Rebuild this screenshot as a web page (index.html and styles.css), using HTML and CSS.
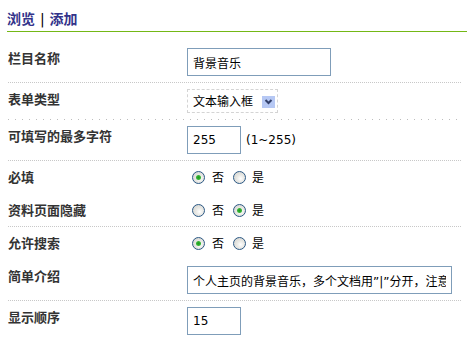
FILE: index.html
```html
<!DOCTYPE html>
<html lang="zh-CN">
<head>
<meta charset="utf-8">
<title>栏目编辑</title>
<link rel="stylesheet" href="styles.css">
</head>
<body>
<div class="title"><span class="tab">浏览</span> <span class="bar">|</span> <span class="tab">添加</span></div>
<div class="form">
  <div class="row">
    <div class="label">栏目名称</div>
    <div class="field"><input class="text w-md" type="text" value="背景音乐"></div>
  </div>
  <div class="row sparse">
    <div class="label">表单类型</div>
    <div class="field">
      <div class="select">
        <span class="select-text">文本输入框</span>
        <span class="select-arrow"><svg width="13" height="12" viewBox="0 0 13 12"><path d="M3.5 4 L6.5 7 L9.5 4" fill="none" stroke="#33406a" stroke-width="2"/></svg></span>
      </div>
    </div>
  </div>
  <div class="row">
    <div class="label">可填写的最多字符</div>
    <div class="field"><input class="text w-sm" type="text" value="255"><span class="hint">(1~255)</span></div>
  </div>
  <div class="row blank">
    <div class="label">必填</div>
    <div class="field"><span class="radio on"></span><span class="opt">否</span><span class="radio"></span><span class="opt">是</span></div>
  </div>
  <div class="row">
    <div class="label">资料页面隐藏</div>
    <div class="field"><span class="radio"></span><span class="opt">否</span><span class="radio on"></span><span class="opt">是</span></div>
  </div>
  <div class="row blank">
    <div class="label">允许搜索</div>
    <div class="field"><span class="radio on"></span><span class="opt">否</span><span class="radio"></span><span class="opt">是</span></div>
  </div>
  <div class="row">
    <div class="label">简单介绍</div>
    <div class="field"><input class="text w-lg" type="text" value="个人主页的背景音乐，多个文档用”|”分开，注意不要超过长度"></div>
  </div>
  <div class="row blank">
    <div class="label">显示顺序</div>
    <div class="field"><input class="text w-sm" type="text" value="15"></div>
  </div>
</div>
</body>
</html>
```

FILE: styles.css
```css
html, body {
  margin: 0;
  padding: 0;
  background: #fff;
}
body {
  font-family: "DejaVu Sans", "Noto Sans CJK SC", sans-serif;
  font-size: 12px;
  color: #000;
}
.title {
  margin: 0 0 10px 7px;
  padding: 9px 0 2px 0;
  line-height: 19px;
  font-size: 14px;
  font-weight: bold;
  border-bottom: 1px solid #74b816;
}
.tab {
  color: #33338a;
  font-family: "Noto Sans CJK SC", sans-serif;
}
.bar {
  color: #000;
  font-weight: normal;
}
.form {
  margin: 0 6px 0 8px;
}
.row {
  display: flex;
  align-items: flex-start;
  padding: 6px 0;
  border-bottom: 1px dotted #c8c8c8;
}
.row.blank {
  border-bottom-color: transparent;
}
.row.sparse {
  border-bottom: none;
  padding-bottom: 7px;
  background: linear-gradient(to right, #bdbdbd 1px, transparent 1px) left bottom / 7px 1px repeat-x;
}
.label {
  width: 179px;
  flex: none;
  line-height: 20px;
  font-family: "Noto Sans CJK SC", sans-serif;
  font-size: 13px;
  font-weight: bold;
  color: #333;
}
.field {
  display: flex;
  align-items: center;
  min-height: 20px;
}
.text {
  box-sizing: border-box;
  height: 28px;
  margin: 0;
  padding: 0 5px;
  border: 1px solid #7f9db9;
  font-family: "DejaVu Sans", "Noto Sans CJK SC", sans-serif;
  font-size: 12px;
  color: #000;
  background: #fff;
  outline: none;
}
.w-md { width: 144px; }
.w-sm { width: 54px; }
.w-lg { width: 265px; }
.hint {
  margin-left: 5px;
}
.select {
  box-sizing: border-box;
  width: 91px;
  height: 24px;
  border: 1px dashed #d4d4d4;
  display: flex;
  align-items: center;
  padding-left: 5px;
}
.select-text {
  font-family: "Noto Sans CJK SC", sans-serif;
  line-height: 20px;
}
.select-arrow {
  width: 13px;
  height: 12px;
  margin-left: 9px;
  margin-top: 1px;
  background: #b6c8f4;
  display: flex;
}
.radio {
  box-sizing: border-box;
  width: 13px;
  height: 13px;
  border-radius: 50%;
  border: 1px solid #2b5884;
  background: radial-gradient(circle at 60% 60%, #fff 0, #e8e8e4 40%, #cfcfca 100%);
  position: relative;
  flex: none;
}
.radio.on::after {
  content: "";
  position: absolute;
  left: 3px;
  top: 3px;
  width: 5px;
  height: 5px;
  border-radius: 50%;
  background: radial-gradient(circle, #1f9a1f 0, #35b535 60%, #9ad89a 100%);
}
.radio:first-child {
  margin-left: 5px;
}
.opt {
  font-family: "Noto Sans CJK SC", sans-serif;
  margin-left: 7px;
  margin-right: 9px;
  line-height: 20px;
}
.opt:last-child {
  margin-left: 6px;
}
```
